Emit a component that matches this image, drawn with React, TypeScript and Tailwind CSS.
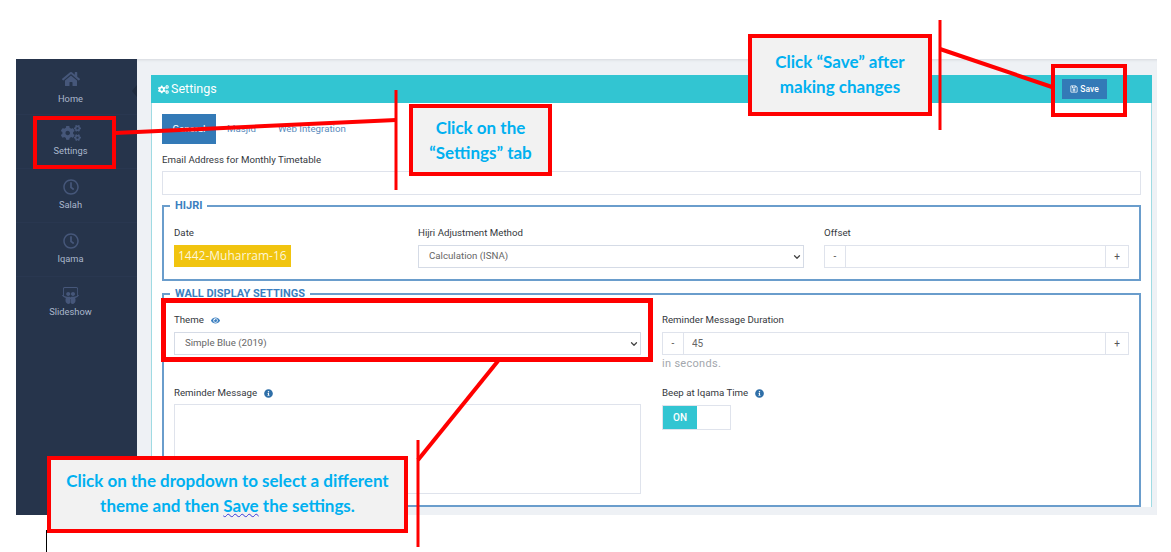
import { FaHome, FaCogs, FaRegClock, FaSlideshare, FaRegSave, FaEye, FaInfoCircle } from "react-icons/fa";
import { ChevronDown } from "lucide-react";

const navItems = [
  { label: "Home", icon: FaHome, size: 18, gap: "mt-[3px]" },
  { label: "Settings", icon: FaCogs, size: 20, gap: "mt-[1px]" },
  { label: "Salah", icon: FaRegClock, size: 16, gap: "mt-[1px]" },
  { label: "Iqama", icon: FaRegClock, size: 16, gap: "mt-[1px]" },
  { label: "Slideshow", icon: FaSlideshare, size: 17, gap: "mt-[0px]" },
];

function Label({ children }: { children: React.ReactNode }) {
  return <div className="h-[14px] flex items-center gap-[7px] text-[9.7px] leading-[14px] text-[#34383d]">{children}</div>;
}

function Stepper({ value }: { value?: string }) {
  return (
    <div className="mt-[5px] h-[23px] flex border border-[#dfe3ec] text-[10px] text-[#555]">
      <span className="w-[20px] flex items-center justify-center bg-white">-</span>
      <input
        readOnly
        value={value ?? ""}
        className="flex-1 min-w-0 border-x border-[#dfe3ec] bg-white px-[8px] text-[10px] text-[#666] outline-none"
      />
      <span className="w-[22px] flex items-center justify-center bg-white">+</span>
    </div>
  );
}

function Select({ value }: { value: string }) {
  return (
    <div className="relative mt-[5px]">
      <select
        defaultValue={value}
        className="block w-full h-[23px] appearance-none border border-[#d5dbe6] bg-white pl-[10px] text-[9.7px] text-[#666] outline-none"
      >
        <option>{value}</option>
      </select>
      <ChevronDown size={10} strokeWidth={3} className="absolute right-[2px] top-[7px] text-[#444]" />
    </div>
  );
}

function Legend({ children }: { children: React.ReactNode }) {
  return (
    <legend className="-ml-[4px] px-[5px] h-[12px] text-[11px] leading-[12px] font-bold text-[#3b7fc0]">{children}</legend>
  );
}

function Callout({ className, children }: { className: string; children: React.ReactNode }) {
  return (
    <div
      className={`absolute flex items-center justify-center text-center border-[4px] border-[#ff0000] bg-[#f2f2f2] font-['Lato',sans-serif] font-bold text-[17px] leading-[25px] text-[#00b0f0] ${className}`}
    >
      <div>{children}</div>
    </div>
  );
}

export default function App() {
  return (
    <div className="relative w-[1171px] h-[552px] overflow-hidden bg-white font-['Roboto',sans-serif]">
      {/* App screenshot */}
      <div className="ml-[16px] pt-[59px]">
        <div className="flex w-[1141px] h-[456px] overflow-hidden">
          {/* Sidebar */}
          <aside className="relative w-[121px] shrink-0 bg-[#26344b] pt-[2px] pr-[12px]">
            {navItems.map((item, i) => {
              const Icon = item.icon;
              return (
                <div
                  key={item.label}
                  className={`h-[54px] -mr-[12px] pr-[12px] flex flex-col items-center pt-[8px] ${i < 4 ? "border-b border-[#293750]" : ""}`}
                >
                  <div className="h-[20px] flex items-center justify-center">
                    <Icon className="text-[#46577a]" size={item.size} />
                  </div>
                  <div className={`${item.gap} text-[9.3px] leading-[13px] text-[#aab7cc]`}>{item.label}</div>
                </div>
              );
            })}
            <div className="absolute right-0 top-[26px] border-y-[6px] border-r-[5px] border-y-transparent border-r-[#1f2b3e]" />
          </aside>

          {/* Main */}
          <main className="flex-1 bg-[#eef1f5] pt-[16px] pl-[14px] pr-[5px] shadow-[inset_0_3px_3px_-2px_#d5d8de]">
            <div className="border-x border-[#9fdbe3] bg-white">
              <div className="h-[28px] -mx-px flex items-center justify-between bg-[#32c5d2] pl-[7px] pr-[45px]">
                <div className="flex items-center gap-[2px] text-[12.5px] text-white">
                  <FaCogs size={11} />
                  <span>Settings</span>
                </div>
                <button className="w-[45px] h-[20px] flex items-center justify-center gap-[2px] bg-[#337ab7] text-[8.5px] font-medium text-white">
                  <FaRegSave size={8} />
                  Save
                </button>
              </div>

              <div className="pt-[11px] pl-[10px] pr-[10px]">
                <div className="flex h-[30px] items-center text-[9.7px]">
                  <span className="w-[54px] h-full flex items-center justify-center bg-[#337ab7] text-white">General</span>
                  <span className="ml-[11px] text-[#5b8cbd]">Masjid</span>
                  <span className="ml-[22px] text-[#5b8cbd]">Web Integration</span>
                </div>

                <div className="mt-[9px]">
                  <Label>Email Address for Monthly Timetable</Label>
                </div>
                <input readOnly className="mt-[4px] block w-full h-[24px] border border-[#dfe3ec] bg-white outline-none" />

                <fieldset className="mt-[5px] border-2 border-[#6a9dcc] px-[10px] pt-[14px] pb-[11px]">
                  <Legend>HIJRI</Legend>
                  <div className="grid grid-cols-[224px_386px_1fr] gap-x-[20px]">
                    <div>
                      <Label>Date</Label>
                      <div className="mt-[5px] w-[117px] h-[22px] flex items-center pl-[4px] whitespace-nowrap bg-[#f1c40f] font-['Open_Sans',sans-serif] text-[12px] text-[#fdf6d8]">
                        1442-Muharram-16
                      </div>
                    </div>
                    <div>
                      <Label>Hijri Adjustment Method</Label>
                      <Select value="Calculation (ISNA)" />
                    </div>
                    <div>
                      <Label>Offset</Label>
                      <Stepper />
                    </div>
                  </div>
                </fieldset>

                <fieldset className="mt-[7px] border-2 border-[#6a9dcc] px-[10px] pt-[13px] pb-[11px]">
                  <Legend>WALL DISPLAY SETTINGS</Legend>
                  <div className="grid grid-cols-2 gap-x-[21px]">
                    <div>
                      <Label>
                        Theme <FaEye size={9} className="text-[#3b7fc0]" />
                      </Label>
                      <Select value="Simple Blue (2019)" />
                      <div className="mt-[31px]">
                        <Label>
                          Reminder Message <FaInfoCircle size={9} className="text-[#2f6fa8]" />
                        </Label>
                      </div>
                      <textarea readOnly className="mt-[4px] block w-full h-[90px] resize-none border border-[#dfe3ec] bg-white outline-none" />
                    </div>
                    <div>
                      <Label>Reminder Message Duration</Label>
                      <Stepper value="45" />
                      <div className="mt-[2px] h-[14px] text-[11px] leading-[14px] tracking-[0.3px] text-[#a3a7ad]">in seconds.</div>
                      <div className="mt-[15px]">
                        <Label>
                          Beep at Iqama Time <FaInfoCircle size={9} className="text-[#2f6fa8]" />
                        </Label>
                      </div>
                      <div className="mt-[5px] w-[69px] h-[25px] flex border border-[#dfe3ec]">
                        <span className="w-[34px] flex items-center justify-center bg-[#32c5d2] text-[10px] font-medium text-white">ON</span>
                      </div>
                    </div>
                  </div>
                </fieldset>
              </div>
            </div>
          </main>
        </div>
      </div>

      {/* Annotation lines */}
      <svg className="absolute inset-0 pointer-events-none" width="1171" height="552" viewBox="0 0 1171 552">
        <g stroke="#ff0000" fill="none">
          <line x1="115" y1="133" x2="396" y2="120" strokeWidth="4" />
          <line x1="396" y1="90" x2="396" y2="190" strokeWidth="3" />
          <line x1="940" y1="20" x2="940" y2="130" strokeWidth="3" />
          <line x1="940" y1="49" x2="1052" y2="87" strokeWidth="4" />
          <line x1="498" y1="361" x2="418" y2="460" strokeWidth="4" />
          <line x1="418" y1="440" x2="418" y2="547" strokeWidth="3" />
        </g>
        <line x1="46.5" y1="530" x2="46.5" y2="552" stroke="#000000" strokeWidth="1" />
      </svg>

      {/* Red highlight boxes */}
      <div className="absolute left-[33px] top-[116px] w-[83px] h-[53px] border-[4px] border-[#ff0000]" />
      <div className="absolute left-[1051px] top-[64px] w-[76px] h-[53px] border-[4px] border-[#ff0000]" />
      <div className="absolute left-[161px] top-[298px] w-[492px] h-[64px] border-[5px] border-[#ff0000]" />

      <Callout className="left-[409px] top-[104px] w-[143px] h-[72px] pb-[1px]">
        Click on the
        <br />
        “Settings” tab
      </Callout>
      <Callout className="left-[748px] top-[34px] w-[184px] h-[82px] pb-[2px]">
        Click “Save” after
        <br />
        making changes
      </Callout>
      <Callout className="left-[47px] top-[456px] w-[361px] h-[77px] pb-[4px]">
        Click on the dropdown to select a different
        <br />
        theme and then <span className="underline decoration-wavy decoration-[#3a3ad6] decoration-1">Save</span> the settings.
      </Callout>
    </div>
  );
}
